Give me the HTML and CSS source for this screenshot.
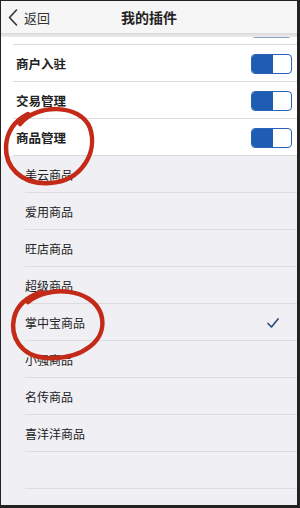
FILE: index.html
```html
<!DOCTYPE html>
<html lang="zh">
<head>
<meta charset="utf-8">
<link rel="stylesheet" href="styles.css">
</head>
<body>
<div class="frame">
  <header class="topbar">
    <div class="back">
      <svg class="chev" width="10" height="17" viewBox="0 0 10 17"><path d="M8.5 1 L1.5 8.5 L8.5 16" fill="none" stroke="#333" stroke-width="1.6" stroke-linecap="round" stroke-linejoin="round"/></svg>
      <span>返回</span>
    </div>
    <div class="title">我的插件</div>
  </header>
  <div class="shade"></div>
  <div class="row partial">
    <div class="toggle cut"><i></i></div>
  </div>
  <div class="row main"><span>商户入驻</span><div class="toggle"><i></i></div></div>
  <div class="row main"><span>交易管理</span><div class="toggle"><i></i></div></div>
  <div class="row main"><span>商品管理</span><div class="toggle"><i></i></div></div>
  <div class="sub">
    <div class="row item"><span>美云商品</span></div>
    <div class="row item"><span>爱用商品</span></div>
    <div class="row item"><span>旺店商品</span></div>
    <div class="row item"><span>超级商品</span></div>
    <div class="row item"><span>掌中宝商品</span>
      <svg class="check" width="12" height="10" viewBox="0 0 12 10"><path d="M1 5.5 L4.5 9 L11 1" fill="none" stroke="#2d4f7c" stroke-width="1.7" stroke-linecap="round" stroke-linejoin="round"/></svg>
    </div>
    <div class="row item"><span>小强商品</span></div>
    <div class="row item"><span>名传商品</span></div>
    <div class="row item"><span>喜洋洋商品</span></div>
    <div class="row item"><span></span></div>
  </div>
  <svg class="marks" width="300" height="508" viewBox="0 0 300 508">
    <path d="M20 124 C36 104 80 103 90 128 C98 152 82 181 50 183 C20 185 5 166 6 146 C7 131 14 121 28 114" fill="none" stroke="#c42a18" stroke-width="4.5" stroke-linecap="round"/>
    <path d="M28 302 C48 285 92 288 101 314 C109 340 82 360 46 358 C20 356 10 336 14 318 C17 305 26 297 42 292" fill="none" stroke="#c42a18" stroke-width="4.5" stroke-linecap="round"/>
  </svg>
</div>
</body>
</html>
```

FILE: styles.css
```css
* { box-sizing: border-box; }
html, body { margin: 0; padding: 0; }
body {
  width: 300px;
  height: 508px;
  overflow: hidden;
  font-family: "Noto Sans CJK SC", "Noto Sans", sans-serif;
  color: #222;
}
.frame {
  position: relative;
  width: 300px;
  height: 508px;
  border-top: 1px solid #222;
  border-left: 1px solid #222;
  border-right: 3px solid #222;
  border-bottom: 3px solid #222;
  background: #efeff4;
  overflow: hidden;
}
.topbar {
  height: 32px;
  background: #f6f6f6;
  display: flex;
  align-items: center;
  position: relative;
}
.back {
  display: flex;
  align-items: center;
  gap: 6px;
  padding-left: 7px;
  font-size: 13px;
  color: #333;
}
.title {
  position: absolute;
  left: 0;
  right: 0;
  top: 6px;
  text-align: center;
  font-size: 14px;
  font-weight: 700;
  pointer-events: none;
}
.shade {
  height: 4px;
  background: linear-gradient(#dadada, #ececec);
}
.row {
  display: flex;
  align-items: center;
  justify-content: space-between;
  height: 37px;
  position: relative;
}
.row::after {
  content: "";
  position: absolute;
  left: 12px;
  right: 0;
  bottom: 0;
  height: 1px;
  background: #dcdce0;
}
.partial {
  height: 8px;
  background: #fff;
  overflow: hidden;
  align-items: flex-end;
  justify-content: flex-end;
  padding-right: 5px;
}
.main {
  background: #fff;
  padding: 0 5px 0 15px;
  font-size: 12.5px;
  font-weight: 700;
}
.toggle {
  width: 41px;
  height: 20px;
  border: 1.5px solid #2a62b5;
  border-radius: 4px;
  background: #fff;
  overflow: hidden;
  display: flex;
}
.toggle i {
  display: block;
  width: 21px;
  height: 100%;
  background: #1f5db5;
}
.toggle.cut {
  flex: none;
  transform: translateY(-7px);
  border-color: #8a9fbf;
}
.sub { background: #efeff4; }
.item {
  padding: 0 18px 0 24px;
  font-size: 12px;
  color: #222;
}
.item::after { left: 24px; }
.marks {
  position: absolute;
  left: -1px;
  top: -1px;
  pointer-events: none;
}
```
